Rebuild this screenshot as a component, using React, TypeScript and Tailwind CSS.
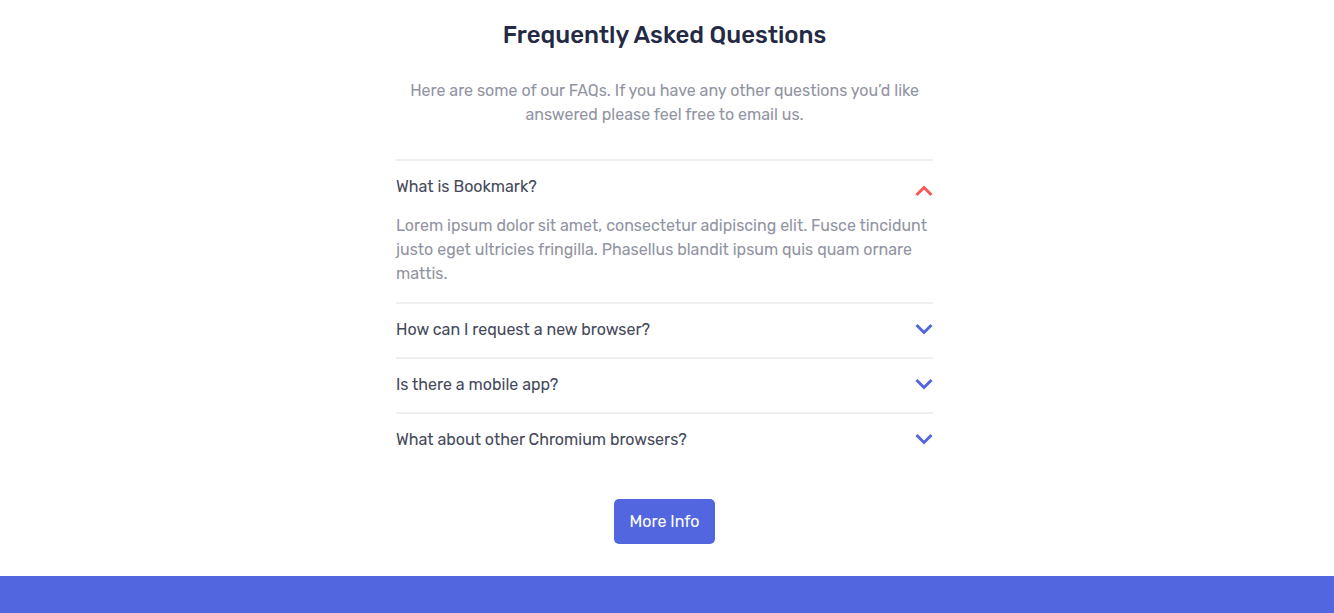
import React from "react";

const faqs = [
  {
    q: "What is Bookmark?",
    a: "Lorem ipsum dolor sit amet, consectetur adipiscing elit. Fusce tincidunt justo eget ultricies fringilla. Phasellus blandit ipsum quis quam ornare mattis.",
    open: true,
  },
  { q: "How can I request a new browser?", a: "", open: false },
  { q: "Is there a mobile app?", a: "", open: false },
  { q: "What about other Chromium browsers?", a: "", open: false },
];

function Arrow({ up }: { up: boolean }) {
  return (
    <svg
      width="18"
      height="12"
      viewBox="0 0 18 12"
      className={up ? "rotate-180 mt-[8px]" : "mt-[-2px]"}
    >
      <path
        d="M1.5 2l7.5 7.5L16.5 2"
        fill="none"
        stroke={up ? "#FA5757" : "#5267DF"}
        strokeWidth="3"
      />
    </svg>
  );
}

export default function App() {
  return (
    <div
      className="min-h-screen bg-white flex flex-col"
      style={{ fontFamily: "Rubik, Inter, 'Open Sans', sans-serif" }}
    >
      <section className="flex flex-col items-center pr-[5px] pt-[19px]">
        <h2 className="text-[24px] leading-[32px] font-medium text-[#242A45]">
          Frequently Asked Questions
        </h2>
        <p className="mt-[28px] w-[540px] text-center text-[16px] leading-[24px] text-[#9194A2]">
          Here are some of our FAQs. If you have any other questions you’d like
          answered please feel free to email us.
        </p>
        <div className="mt-[32px] w-[537px]">
          {faqs.map((f) => (
            <div key={f.q} className="border-t-2 border-[#EFEFF1]">
              <div className="flex items-center justify-between pt-[14px] pb-[15px]">
                <span className="text-[16px] leading-[24px] text-[#45495B]">
                  {f.q}
                </span>
                <Arrow up={f.open} />
              </div>
              {f.open && (
                <p className="pb-[16px] text-[16px] leading-[24px] text-[#9194A2]">
                  {f.a}
                </p>
              )}
            </div>
          ))}
        </div>
        <button className="mt-[32px] h-[45px] w-[101px] rounded-[5px] bg-[#5267DF] text-[16px] font-normal text-white">
          More Info
        </button>
      </section>
      <div className="mt-auto h-[37px] bg-[#5267DF]" />
    </div>
  );
}
